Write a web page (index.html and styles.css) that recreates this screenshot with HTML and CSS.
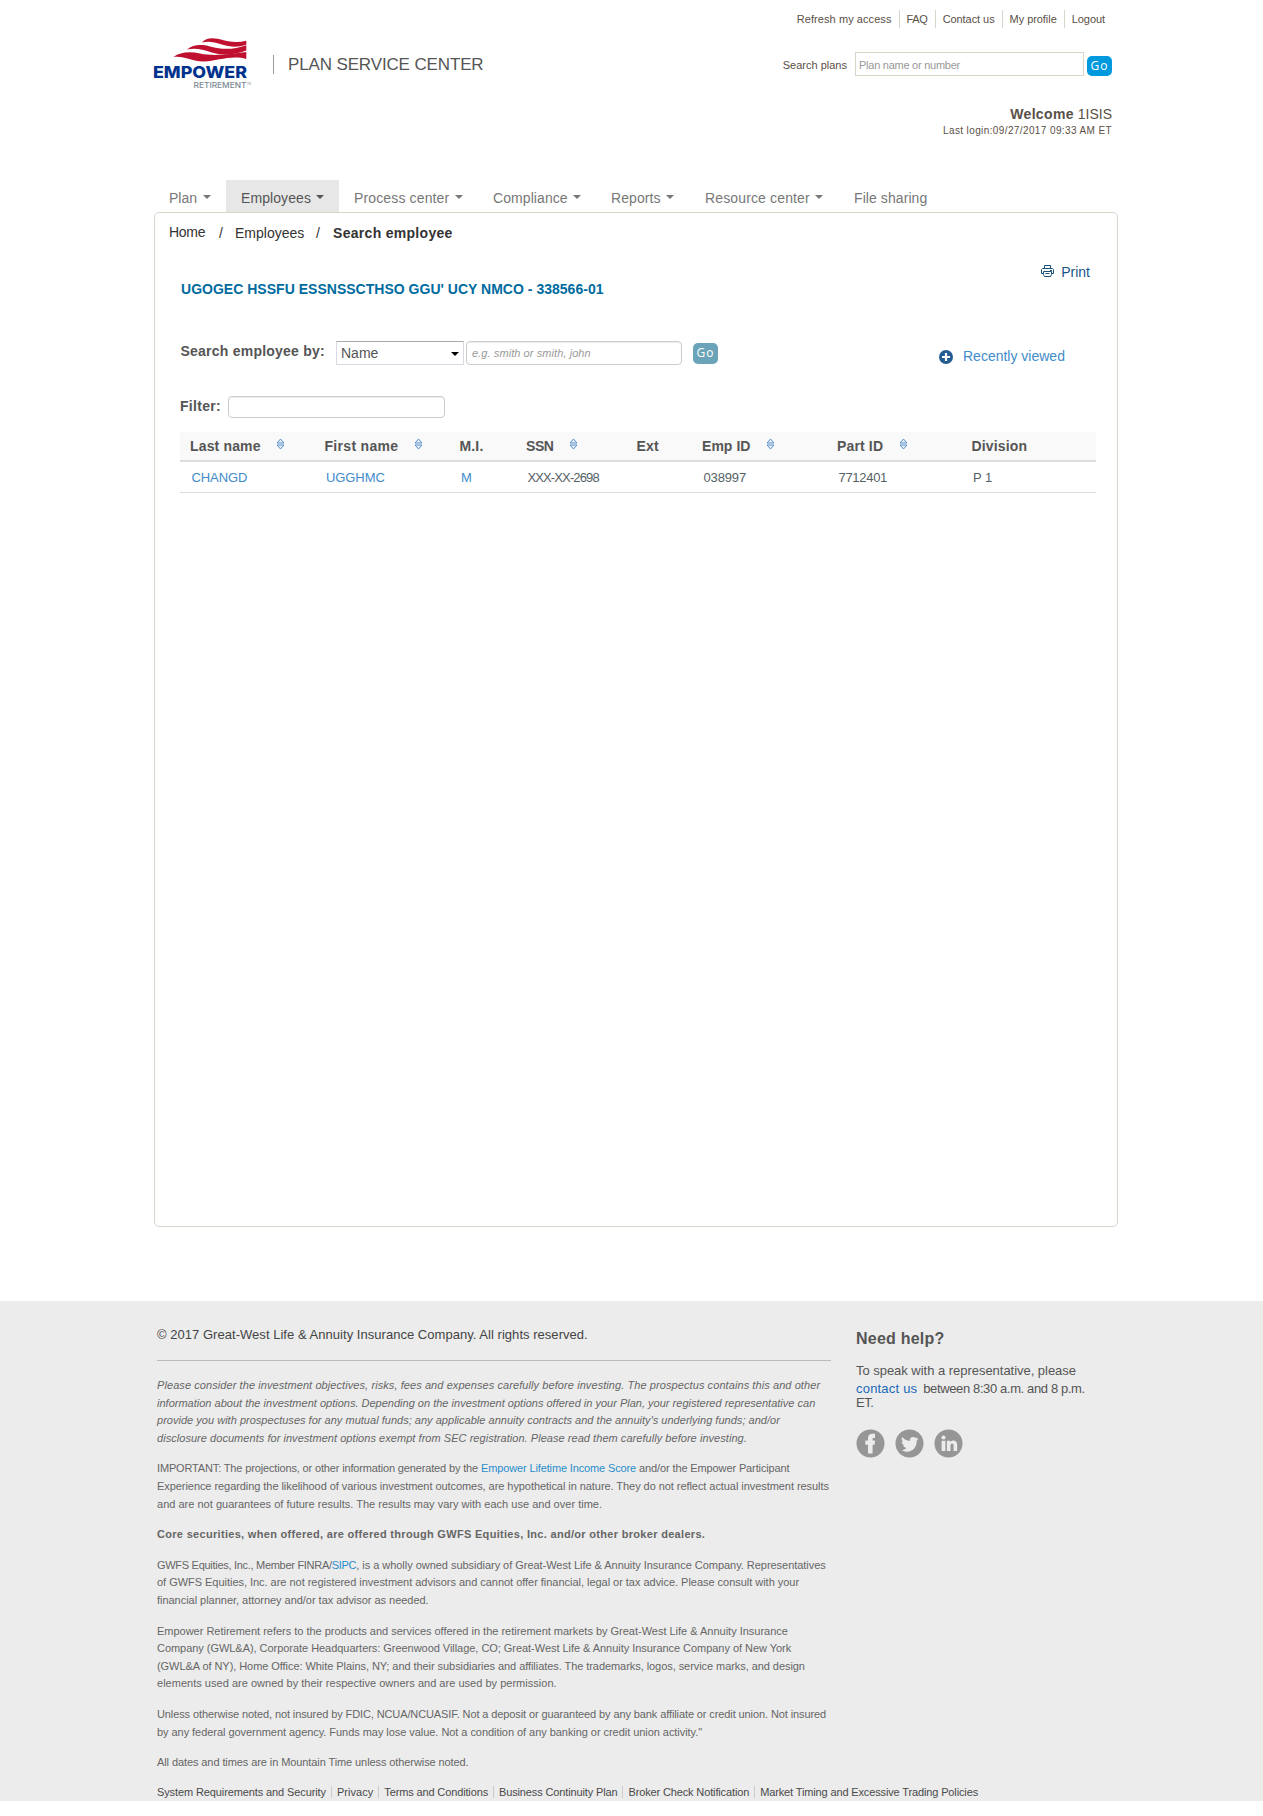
FILE: index.html
```html
<!DOCTYPE html>
<html lang="en">
<head>
<meta charset="utf-8">
<title>Plan Service Center - Search employee</title>
<link rel="stylesheet" href="styles.css">
</head>
<body>
<div class="wrap">
  <header class="header">
    <div class="brand">
      <svg class="logo" width="100" height="56" viewBox="0 0 100 56" role="img" aria-label="Empower Retirement">
        <g fill="#c0102f">
          <path d="M48 4.500C52 -.500 58 -.500 65 1C75 4 83 5 92.300 2.800V6.800C83 9.800 76 9 67 6.200C60 3.800 54 3 48 4.500Z"/>
          <path d="M33 11.500C39 6.300 48 6.300 56 8.500C69 12 80 11.500 92.300 7.200V12.500C80 17.200 69 17.800 57 14.300C48 11.300 42 10 33 11.500Z"/>
          <path d="M19.500 19C26 13.800 36 13.200 46 15.500C60 18.500 76 16 92.300 14V21C78 16.800 63 23 50 23.500C38 23.700 30 17.500 19.500 19Z"/>
        </g>
        <text class="logo-name" x="-1" y="40" textLength="94" lengthAdjust="spacingAndGlyphs">EMPOWER</text>
        <text class="logo-sub" x="39.500" y="50" textLength="53" lengthAdjust="spacingAndGlyphs">RETIREMENT</text>
        <text class="logo-tm" x="93" y="46.500" textLength="4" lengthAdjust="spacingAndGlyphs">TM</text>
      </svg>
      <span class="product">PLAN SERVICE CENTER</span>
    </div>
    <div class="tools">
      <nav class="toplinks">
        <a class="wide">Refresh my access</a><a class="tight">FAQ</a><a>Contact us</a><a>My profile</a><a>Logout</a>
      </nav>
      <form class="plansearch">
        <label>Search plans</label>
        <span class="planfield">Plan name or number</span>
        <span class="go go-blue">Go</span>
      </form>
      <div class="welcome"><b>Welcome</b> 1ISIS</div>
      <div class="login">Last login:09/27/2017 09:33 AM ET</div>
    </div>
  </header>

  <nav class="menu">
    <a class="m1">Plan<i></i></a><a class="m2 on">Employees<i></i></a><a class="m3">Process center<i></i></a><a class="m4">Compliance<i></i></a><a class="m5">Reports<i></i></a><a class="m6">Resource center<i></i></a><a class="m7">File sharing</a>
  </nav>

  <main class="panel">
    <div class="crumbs"><span class="home">Home</span><span class="sl s1">/</span><span class="c2">Employees</span><span class="sl s2">/</span><b>Search employee</b></div>
    <div class="titlebar">
      <h1>UGOGEC HSSFU ESSNSSCTHSO GGU' UCY NMCO - 338566-01</h1>
      <a class="print">
        <svg width="13" height="12" viewBox="0 0 13 12" fill="none" stroke="#17507c"><path d="M3.500 3.500V.500H9.500V3.500M2.500 8.500H.500V4.500L1.500 3.500H11.500L12.500 4.500V8.500H10.500M2.500 6.500H10.500V9.500L9.500 11.500H3.500L2.500 9.500ZM4.500 8.500H8.500M9 5.500H11"/></svg>
        <span>Print</span>
      </a>
    </div>
    <div class="searchbar">
      <label>Search employee by:</label>
      <span class="select">Name<i></i></span>
      <span class="field query">e.g. smith or smith, john</span>
      <span class="go go-teal">Go</span>
      <a class="recent">
        <svg width="14" height="14" viewBox="0 0 14 14"><circle cx="7" cy="7" r="7" fill="#245d92"/><path d="M7 3V11M3 7H11" stroke="#fff" stroke-width="2.200"/></svg>
        <span>Recently viewed</span>
      </a>
    </div>
    <div class="filterbar"><label>Filter:</label><span class="field filter"></span></div>
    <svg class="defs" width="0" height="0"><symbol id="sort" viewBox="0 0 9 12"><path d="M1 5L4.500 1L8 5ZM1 7H8L4.500 11Z" fill="#e4eef8" stroke="#5a8fc8"/></symbol></svg>
    <div class="table">
      <div class="row head">
        <span>Last name<svg><use href="#sort"/></svg></span><span class="w3">First name<svg><use href="#sort"/></svg></span><span>M.I.</span><span class="ssn">SSN<svg><use href="#sort"/></svg></span><span>Ext</span><span class="w0">Emp ID<svg><use href="#sort"/></svg></span><span>Part ID<svg><use href="#sort"/></svg></span><span>Division</span>
      </div>
      <div class="row data">
        <a>CHANGD</a><a>UGGHMC</a><a>M</a><span class="masked">XXX-XX-2698</span><span></span><span class="emp">038997</span><span class="part">7712401</span><span>P 1</span>
      </div>
    </div>
  </main>
</div>

<footer class="footer">
  <div class="footer-in">
    <div class="legal">
      <div class="copy">© 2017 Great-West Life &amp; Annuity Insurance Company. All rights reserved.</div>
      <p class="ital"><span class="k080">Please consider the investment objectives, risks, fees and expenses carefully before investing. The prospectus contains this and other</span><br><span class="k007">information about the investment options. Depending on the investment options offered in your Plan, your registered representative can</span><br><span class="k020">provide you with prospectuses for any mutual funds; any applicable annuity contracts and the annuity's underlying funds; and/or</span><br><span class="k045">disclosure documents for investment options exempt from SEC registration. Please read them carefully before investing.</span></p>
      <p><span class="n150">IMPORTANT: The projections, or other information generated by the</span> <a class="n140">Empower Lifetime Income Score</a> <span class="n120">and/or the Empower Participant</span><br><span class="n060">Experience regarding the likelihood of various investment outcomes, are hypothetical in nature. They do not reflect actual investment results</span><br><span class="k015">and are not guarantees of future results. The results may vary with each use and over time.</span></p>
      <p class="strong">Core securities, when offered, are offered through GWFS Equities, Inc. and/or other broker dealers.</p>
      <p><span class="n300">GWFS Equities, Inc., Member FINRA/<a>SIPC</a></span><span class="n035">, is a wholly owned subsidiary of Great-West Life &amp; Annuity Insurance Company. Representatives</span><br><span class="n030">of GWFS Equities, Inc. are not registered investment advisors and cannot offer financial, legal or tax advice. Please consult with your</span><br><span class="n030">financial planner, attorney and/or tax advisor as needed.</span></p>
      <p><span class="n012">Empower Retirement refers to the products and services offered in the retirement markets by Great-West Life &amp; Annuity Insurance</span><br><span class="n042">Company (GWL&amp;A), Corporate Headquarters: Greenwood Village, CO; Great-West Life &amp; Annuity Insurance Company of New York</span><br><span class="n060">(GWL&amp;A of NY), Home Office: White Plains, NY; and their subsidiaries and affiliates. The trademarks, logos, service marks, and design</span><br><span class="k020">elements used are owned by their respective owners and are used by permission.</span></p>
      <p><span class="n105">Unless otherwise noted, not insured by FDIC, NCUA/NCUASIF. Not a deposit or guaranteed by any bank affiliate or credit union. Not insured</span><br><span class="n050">by any federal government agency. Funds may lose value. Not a condition of any banking or credit union activity."</span></p>
      <p class="n090">All dates and times are in Mountain Time unless otherwise noted.</p>
      <nav class="policies"><a>System Requirements and Security</a><a class="even">Privacy</a><a>Terms and Conditions</a><a>Business Continuity Plan</a><a>Broker Check Notification</a><a>Market Timing and Excessive Trading Policies</a></nav>
    </div>
    <aside class="help">
      <h2>Need help?</h2>
      <p class="speak">To speak with a representative, please</p>
      <p class="speak"><a>contact us</a><span class="hours">between 8:30 a.m. and 8 p.m.</span></p>
      <p class="et">ET.</p>
      <div class="social">
        <svg width="29" height="29" viewBox="0 0 29 29"><circle cx="14.500" cy="14.500" r="14" fill="#969696"/><path d="M12 24.500V15.800H9.300V11.500H12V9.200C12 6.200 13.700 4.800 16.300 4.800H19V9H17.600C16.800 9 16.600 9.300 16.600 10V11.500H19L18.600 15.800H16.600V24.500Z" fill="#ececec"/></svg>
        <svg width="29" height="29" viewBox="0 0 29 29"><circle cx="14.500" cy="14.500" r="14" fill="#969696"/><path d="M23.500 9.600C22.800 9.900 22.200 10.100 21.400 10.200C22.200 9.700 22.700 9 23 8.200C22.300 8.600 21.500 8.900 20.700 9.100C18.300 6.700 14.300 8.400 14.900 12C11.700 11.900 9 10.400 7.200 8.100C6.200 9.800 6.700 12 8.300 13.100C7.700 13.100 7.100 12.900 6.700 12.600C6.700 14.400 7.900 15.900 9.600 16.300C9.100 16.400 8.500 16.400 8 16.300C8.500 17.800 9.800 18.800 11.400 18.900C9.900 20.300 8.500 21 7 21.200C14 25.300 22 20.500 21.700 11.800C22.400 11.200 23 10.500 23.500 9.600Z" fill="#ececec"/></svg>
        <svg width="29" height="29" viewBox="0 0 29 29"><circle cx="14.500" cy="14.500" r="14" fill="#969696"/><circle cx="9.500" cy="8.500" r="2" fill="#ececec"/><path d="M7.600 11.700H11.400V22H7.600ZM12.900 11.700H16.400V13.100C18 10.500 23.200 11 23.200 16V22H19.600V16.700C19.600 13.800 16.500 13.900 16.500 16.700V22H12.900Z" fill="#ececec"/></svg>
      </div>
    </aside>
  </div>
</footer>
</body>
</html>
```
FILE: styles.css
```css
*{box-sizing:border-box}
body{margin:0;background:#fff;color:#555;font:14px/20px "Liberation Sans",Arial,sans-serif;white-space:nowrap}
p,h1,h2{margin:0}
.wrap{width:964px;margin-left:154px;height:1301px}

.header{display:flex;justify-content:space-between;height:180px}
.brand{display:flex;align-items:flex-start;padding-top:38px}
.logo{overflow:visible;flex:none}
.logo-name{font:800 16.5px Inter,"Liberation Sans",sans-serif;fill:#00338d}
.logo-sub{font:500 8px Inter,"Liberation Sans",sans-serif;fill:#7a8894}
.logo-tm{font:3px "Open Sans",sans-serif;fill:#7a8894}
.product{margin:17px 0 0 19px;padding-left:14px;border-left:1px solid #999;font-size:17px;line-height:19px;letter-spacing:-.136px;color:#555}

.tools{padding-right:6px;color:#5a5047}
.toplinks{display:flex;justify-content:flex-end;padding-top:10px;font-size:11px;line-height:18px}
.toplinks a{padding:0 7px;border-left:1px solid #d6d6ca;letter-spacing:-.06px}
.toplinks a:first-child{border-left:0}
.toplinks .wide{letter-spacing:.07px}
.toplinks .tight{letter-spacing:-.3px}
.plansearch{display:flex;margin-top:24px;height:24px;font-size:11px;line-height:26px;justify-content:flex-end}
.planfield{width:229px;margin:0 3px 0 8px;padding-left:3px;border:1px solid #d6d6ca;line-height:24px;color:#999;letter-spacing:-.252px}
.go{display:block;width:25px;height:21px;border-radius:5px;font:12px/20px "Open Sans",sans-serif;letter-spacing:1px;text-align:center;color:#fff}
.go-blue{background:#09d;height:20px;margin-top:4px}
.welcome{margin-top:28px;text-align:right}
.welcome b{letter-spacing:.35px}
.login{font-size:10px;line-height:14px;text-align:right;letter-spacing:.387px}

.menu{display:flex;height:32px;line-height:36px;color:#777;letter-spacing:.08px}
.menu a{padding-left:15px}
.menu i{display:inline-block;margin-left:5.500px;border:4px solid transparent;border-top-color:#777;border-bottom:0;vertical-align:4px}
.menu .on{background:#e7e7e7;color:#555}
.menu .on i{border-top-color:#555}
.menu .m1{width:72px;letter-spacing:0}
.menu .m2{width:113px}
.menu .m3{width:139px;letter-spacing:.14px}
.menu .m4{width:118px}
.menu .m5{width:94px}
.menu .m6{width:149px;letter-spacing:.14px}

.panel{height:1015px;border:1px solid #d6d6ca;border-radius:5px;padding:10px 21px 0 25px}
.crumbs{display:flex;margin-left:-11px;color:#333}
.crumbs .home{width:50px;letter-spacing:-.3px;margin-top:-1px}
.crumbs .s1{width:16px}
.crumbs .c2{width:81px}
.crumbs .s2{width:17px}
.crumbs b{letter-spacing:.3px}
.titlebar{display:flex;justify-content:space-between;margin-top:19px;height:69px}
.titlebar h1{margin-top:17px;font-size:14px;line-height:20px;color:#006b9f;letter-spacing:.018px;padding-left:1px}
.print{display:flex;color:#17578a;padding-right:6px}
.print svg{margin:3px 7px 0 0}
.searchbar{display:flex;align-items:flex-start;height:55px;margin-top:10px;color:#555}
.searchbar label{font-weight:bold;letter-spacing:.23px;width:156px;padding-left:.500px}
.select{display:flex;justify-content:space-between;width:128px;height:24px;border:1px solid #d9d9e3;border-top-color:#aaa;padding:0 4px;line-height:23px}
.select i{margin-top:10px;border:4px solid transparent;border-top-color:#000;border-bottom:0;height:4px}
.field{border:1px solid #ccc;border-radius:4px;box-shadow:inset 0 1px 1px rgba(0,0,0,.075)}
.query{width:216px;height:24px;margin-left:2px;padding-left:5px;font:italic 11px/23px "Liberation Sans",sans-serif;letter-spacing:.08px;color:#999}
.go-teal{background:#6ba4b8;margin:2px 0 0 11px}
.recent{display:flex;color:#428bca;margin:5px 0 0 221px}
.recent svg{margin:4px 10px 0 0}
.filterbar{display:flex;height:36px}
.filterbar label{width:48px;font-weight:bold;letter-spacing:.3px}
.filter{width:217px;height:22px}
.defs{position:absolute}
.row{display:grid;grid-template-columns:134.5px 135px 66.5px 110.5px 65.5px 135px 134.5px 134.5px;width:916px}
.head{height:30px;background:#f9f9f9;border-bottom:2px solid #ddd;font-weight:bold;line-height:28px;padding-left:10px;letter-spacing:.15px;color:#555}
.head svg{width:9px;height:12px;margin-left:15.500px;vertical-align:1px}
.head .w3{letter-spacing:.3px}
.head .ssn{letter-spacing:-.43px}
.head .w0{letter-spacing:.04px}
.data{height:31px;border-bottom:1px solid #ddd;line-height:31px;font-size:13px;padding-left:11.500px;color:#555f66}
.data a{color:#428bca;letter-spacing:-.08px}
.data .masked{letter-spacing:-.88px}
.data .emp{letter-spacing:-.148px}
.data .part{letter-spacing:-.304px}

.footer{background:#ececec;height:500px}
.footer-in{display:flex;margin-left:157px}
.legal{width:674px;font-size:11px;line-height:17.6px;color:#666}
.copy{height:60px;padding-top:24px;border-bottom:1px solid #bbb;margin-bottom:16px;font-size:13px;line-height:20px;letter-spacing:.035px;color:#444}
.legal p{margin-bottom:13px}
.legal p a{color:#2a8ccb}
.ital{font-style:italic}
.strong{font-weight:bold;letter-spacing:.308px}
.k007{letter-spacing:.007px}
.k015{letter-spacing:.015px}
.k020{letter-spacing:.02px}
.k045{letter-spacing:.045px}
.k080{letter-spacing:.08px}
.n012{letter-spacing:-.012px}
.n030{letter-spacing:-.03px}
.n035{letter-spacing:-.035px}
.n042{letter-spacing:-.042px}
.n050{letter-spacing:-.05px}
.n060{letter-spacing:-.06px}
.n090{letter-spacing:-.09px}
.n105{letter-spacing:-.105px}
.n120{letter-spacing:-.12px}
.n140{letter-spacing:-.14px}
.n150{letter-spacing:-.15px}
.n300{letter-spacing:-.29px}
.policies{display:flex;line-height:12px;margin-top:-1px;padding-top:2px;color:#4a4a4a}
.policies a{padding:0 5px;border-left:1px solid #ccc;letter-spacing:-.135px}
.policies a:first-child{padding-left:0;border-left:0;letter-spacing:-.11px}
.policies .even{letter-spacing:.05px}
.help{margin-left:25px;font-size:13px;line-height:18px;color:#555}
.help h2{margin:28px 0 13px;font-size:16px;line-height:20px;letter-spacing:.22px}
.help p{letter-spacing:-.03px}
.help a{color:#1a68b8;letter-spacing:.2px}
.help .hours{margin-left:6px;letter-spacing:-.375px}
.help .et{line-height:14px;letter-spacing:-.4px;margin-top:-2px}
.social{display:flex;gap:10px;margin-top:19px}
```
